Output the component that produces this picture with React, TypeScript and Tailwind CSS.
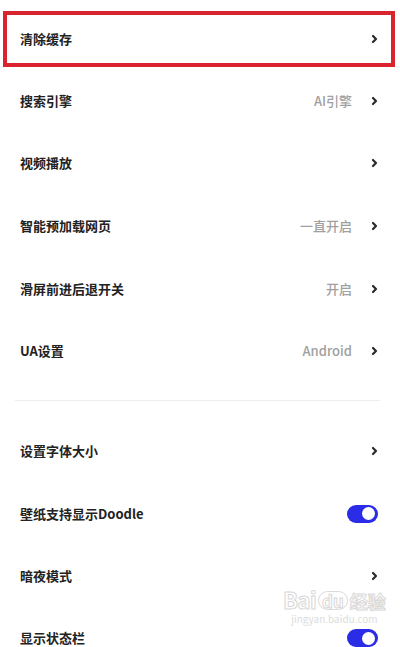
import React from 'react';

type Row = {
  label: string;
  value?: string;
  toggle?: boolean;
  h: string;
};

const topRows: Row[] = [
  { label: '搜索引擎', value: 'AI引擎', h: 'h-[62px]' },
  { label: '视频播放', h: 'h-[62px]' },
  { label: '智能预加载网页', value: '一直开启', h: 'h-[63px]' },
  { label: '滑屏前进后退开关', value: '开启', h: 'h-[63px]' },
  { label: 'UA设置', value: 'Android', h: 'h-[62px]' },
];

const bottomRows: Row[] = [
  { label: '设置字体大小', h: 'h-[62px]' },
  { label: '壁纸支持显示Doodle', toggle: true, h: 'h-[63px]' },
  { label: '暗夜模式', h: 'h-[62px]' },
  { label: '显示状态栏', toggle: true, h: 'h-[62px]' },
];

function Chevron() {
  return (
    <svg width="7" height="10" viewBox="0 0 7 10" className="shrink-0">
      <path d="M2 2 L5 5 L2 8" fill="none" stroke="#2a2a2a" strokeWidth="2.2" strokeLinecap="round" strokeLinejoin="round" />
    </svg>
  );
}

function Toggle() {
  return (
    <div className="w-[31px] h-[18px] rounded-full bg-[#2a2ce6] flex items-center justify-end pr-[3px]">
      <div className="w-[13px] h-[13px] rounded-full bg-white" />
    </div>
  );
}

function SettingRow({ row }: { row: Row }) {
  return (
    <div className={`flex items-center justify-between pl-5 pr-[22px] ${row.h}`}>
      <span className="text-[13px] font-semibold text-[#222]">{row.label}</span>
      {row.toggle ? (
        <Toggle />
      ) : (
        <div className="flex items-center gap-[19px]">
          {row.value && <span className="text-[13px] font-medium text-[#a0a0a0]">{row.value}</span>}
          <Chevron />
        </div>
      )}
    </div>
  );
}

export default function App() {
  return (
    <div
      className="relative w-[400px] h-[647px] overflow-hidden bg-white"
      style={{ fontFamily: '"Noto Sans CJK SC", "Noto Sans", sans-serif' }}
    >
      {/* highlighted row */}
      <div className="mt-[11px] ml-[3px] mr-[5px] h-[56px] border-[4px] border-[#d9232e] flex items-center justify-between pl-[13px] pr-[13px]">
        <span className="text-[13px] font-semibold text-[#222]">清除缓存</span>
        <Chevron />
      </div>

      <div className="mt-[3px]">
        {topRows.map((r) => (
          <SettingRow key={r.label} row={r} />
        ))}
      </div>

      <div className="mt-[18px] ml-[15px] mr-[20px] h-px bg-[#eeeeee]" />

      <div className="mt-[19px]">
        {bottomRows.map((r) => (
          <SettingRow key={r.label} row={r} />
        ))}
      </div>

      {/* watermark */}
      <div className="absolute left-[283px] top-[588px] flex flex-col items-center pointer-events-none">
        <div className="flex items-end gap-[2px] leading-none">
          <span className="text-[22px] font-bold tracking-tight" style={{ WebkitTextStroke: '1px #d8d8d8', color: 'transparent' }}>Bai</span>
          <span className="text-[17px] font-bold px-[3px] rounded-full border border-[#dadada] text-transparent" style={{ WebkitTextStroke: '1px #d8d8d8' }}>du</span>
          <span className="text-[18px] font-bold" style={{ WebkitTextStroke: '1px #d8d8d8', color: 'transparent' }}>经验</span>
        </div>
        <span className="text-[10px] text-[#dcdcdc] leading-none mt-[4px]">jingyan.baidu.com</span>
      </div>
    </div>
  );
}
